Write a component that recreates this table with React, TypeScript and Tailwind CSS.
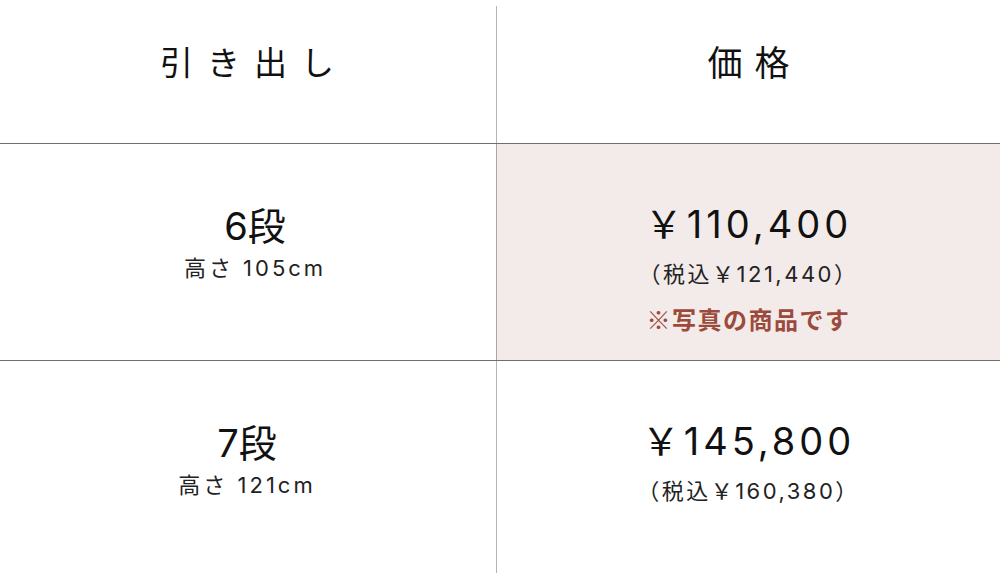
const jp = "font-['Inter','Noto_Sans_CJK_JP',sans-serif]"

function Spec({ label, height, shift }: { label: string; height: string; shift: string }) {
  return (
    <div className={`flex flex-col items-center pt-[60px] ${shift}`}>
      <div className="text-[38px] leading-[1.2] text-[#111]">{label}</div>
      <div className="mt-[3px] text-[22px] leading-[1.4] tracking-[3px] text-[#222]">{height}</div>
    </div>
  )
}

function Price({ price, tax, note }: { price: string; tax: string; note?: string }) {
  return (
    <div className="flex flex-col items-center pt-[58px]">
      <div className="text-[38px] leading-[1.2] tracking-[4px] text-[#111]">{price}</div>
      <div className="mt-[11px] text-[22px] leading-[1.4] tracking-[2.5px] text-[#222]">{tax}</div>
      {note && (
        <div className="mt-[13px] font-['Noto_Sans_CJK_JP',sans-serif] text-[24px] font-bold leading-[1.4] tracking-[1.5px] text-[#9b4a3c]">
          {note}
        </div>
      )}
    </div>
  )
}

export default function App() {
  return (
    <div className={`h-[573px] w-[1000px] overflow-hidden bg-white ${jp}`}>
      {/* header */}
      <div className="grid h-[144px] grid-cols-[496px_1fr] border-b border-[#6f6f6f]">
        <div className="flex items-center justify-center pb-[16px] pl-[12px] text-[33px] tracking-[14px] text-[#111]">引き出し</div>
        <div className="mt-[6px] flex items-center justify-center border-l border-[#b4b4b4] pb-[22px] pl-[12px] text-[35px] tracking-[12px] text-[#111]">
          価格
        </div>
      </div>

      {/* 6段 */}
      <div className="grid h-[217px] grid-cols-[496px_1fr] border-b border-[#6f6f6f]">
        <Spec label="6段" height="高さ 105cm" shift="pl-[14px]" />
        <div className="border-l border-[#a8a8a8] bg-[#f3ebea]">
          <Price price="￥110,400" tax="（税込￥121,440）" note="※写真の商品です" />
        </div>
      </div>

      {/* 7段 */}
      <div className="grid h-[212px] grid-cols-[496px_1fr]">
        <Spec label="7段" height="高さ 121cm" shift="pr-[2px]" />
        <div className="border-l border-[#b4b4b4]">
          <Price price="￥145,800" tax="（税込￥160,380）" />
        </div>
      </div>
    </div>
  )
}
